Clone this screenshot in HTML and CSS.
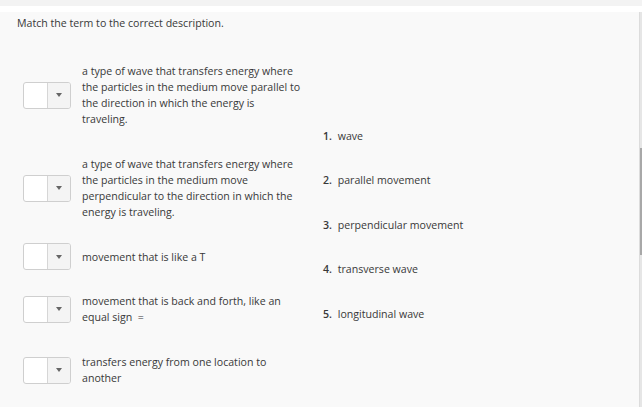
FILE: index.html
```html
<!DOCTYPE html>
<html>
<head>
<meta charset="utf-8">
<link rel="stylesheet" href="styles.css">
</head>
<body>
<div class="topbar"></div>
<main class="panel">
  <p class="prompt">Match the term to the correct description.</p>
  <div class="match">
    <div class="questions">
      <div class="row">
        <div class="select"><span class="sel-value"></span><span class="sel-btn"><span class="caret"></span></span></div>
        <div class="desc">a type of wave that transfers energy where the particles in the medium move parallel to the direction in which the energy is traveling.</div>
      </div>
      <div class="row">
        <div class="select"><span class="sel-value"></span><span class="sel-btn"><span class="caret"></span></span></div>
        <div class="desc">a type of wave that transfers energy where the particles in the medium move perpendicular to the direction in which the energy is traveling.</div>
      </div>
      <div class="row row-tight">
        <div class="select"><span class="sel-value"></span><span class="sel-btn"><span class="caret"></span></span></div>
        <div class="desc">movement that is like a T</div>
      </div>
      <div class="row">
        <div class="select"><span class="sel-value"></span><span class="sel-btn"><span class="caret"></span></span></div>
        <div class="desc">movement that is back and forth, like an equal sign&nbsp; =</div>
      </div>
      <div class="row">
        <div class="select"><span class="sel-value"></span><span class="sel-btn"><span class="caret"></span></span></div>
        <div class="desc">transfers energy from one location to another</div>
      </div>
    </div>
    <ol class="answers">
      <li><b>1.</b> wave</li>
      <li><b>2.</b> parallel movement</li>
      <li><b>3.</b> perpendicular movement</li>
      <li><b>4.</b> transverse wave</li>
      <li><b>5.</b> longitudinal wave</li>
    </ol>
  </div>
  <div class="scrollbar"><div class="thumb"></div></div>
</main>
</body>
</html>
```
FILE: styles.css
```css
html, body {
  margin: 0;
  padding: 0;
}
body {
  background: #f9f9f9;
  font-family: "Open Sans", "Noto Sans", sans-serif;
  font-size: 10.6px;
  color: #383838;
  width: 642px;
  height: 407px;
  overflow: hidden;
}
.topbar {
  height: 6px;
  background: #f3f3f3;
  border-bottom: 6px solid #ffffff;
}
.panel {
  position: relative;
  padding: 3px 0 0 17px;
  height: 395px;
  box-sizing: border-box;
}
.prompt {
  margin: 0;
  line-height: 16px;
}
.match {
  display: grid;
  grid-template-columns: 300px 1fr;
  align-items: center;
  margin-top: 32px;
}
.questions {
  display: flex;
  flex-direction: column;
  gap: 29px;
  padding-left: 6px;
}
.row {
  display: flex;
  align-items: center;
  gap: 11px;
}
.row-tight {
  margin: -6px 0;
}
.desc {
  width: 220px;
  line-height: 16px;
}
.select {
  flex: none;
  display: flex;
  width: 48px;
  height: 27px;
  box-sizing: border-box;
  border: 1px solid #cfcfcf;
  border-radius: 3px;
  background: #ffffff;
  overflow: hidden;
}
.sel-value {
  width: 23px;
  border-right: 1px solid #d6d6d6;
}
.sel-btn {
  flex: 1;
  display: flex;
  align-items: center;
  justify-content: center;
  background: #f4f4f4;
}
.caret {
  width: 0;
  height: 0;
  border-left: 3.5px solid transparent;
  border-right: 3.5px solid transparent;
  border-top: 4px solid #666666;
}
.answers {
  list-style: none;
  margin: 0;
  padding: 0 0 0 6px;
  display: flex;
  flex-direction: column;
  gap: 28.5px;
}
.answers li {
  line-height: 16px;
}
.answers b {
  font-weight: 600;
  margin-right: 3px;
}
.scrollbar {
  position: absolute;
  top: 0;
  right: 0;
  width: 2px;
  height: 100%;
  background: #e6e6e6;
  border-left: 1px solid #dcdcdc;
}
.thumb {
  position: absolute;
  top: 136px;
  left: 0;
  width: 2px;
  height: 107px;
  background: #a8a8a8;
}
```
